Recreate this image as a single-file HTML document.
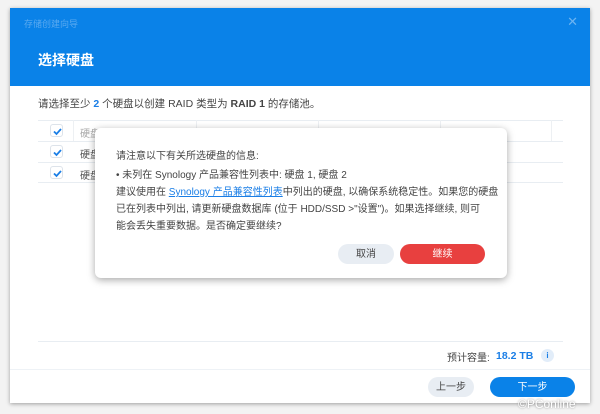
<!DOCTYPE html>
<html><head><meta charset="utf-8"><style>
*{margin:0;padding:0;box-sizing:border-box}
body{width:600px;height:414px;background:#f3f3f3;font-family:"Liberation Sans","Noto Sans CJK SC",sans-serif;position:relative;overflow:hidden;color:#333}
.win{position:absolute;left:10px;top:8px;width:580px;height:395px;background:#fff;box-shadow:0 1px 4px rgba(0,0,0,.35)}
.hd{position:absolute;left:0;top:0;width:580px;height:78px;background:#0a82e8}
.t1{position:absolute;left:14px;top:9px;font-size:9px;color:#5aaaf0}
.x{position:absolute;right:12px;top:6px;font-size:13px;color:#6cb4f2}
.t2{position:absolute;left:28px;top:42px;font-size:14px;color:#fff;font-weight:bold}
.abs{position:absolute;white-space:nowrap}
.line{position:absolute;height:1px;background:#e8edf2}
.vl{position:absolute;width:1px;background:#edf0f3;top:112px;height:21px}
.cb{position:absolute;width:13px;height:13px;border:1px solid #dde3ea;border-radius:3px}
.cb svg{position:absolute;left:1px;top:1px}
.modal{position:absolute;left:95px;top:128px;width:412px;height:150px;background:#fff;border-radius:6px;box-shadow:0 2px 8px rgba(0,0,0,.35);font-size:10px;color:#444}
.btn{position:absolute;border-radius:10px;font-size:10px;height:20px;display:flex;align-items:center;justify-content:center;line-height:1;padding-top:1px}
</style></head><body>
<div class="win">
<div class="hd"><div class="t1">存储创建向导</div><div class="x">✕</div><div class="t2">选择硬盘</div></div>
<div class="abs" style="left:28px;top:88px;font-size:10.5px;color:#444">请选择至少 <b style="color:#1a7ee6">2</b> 个硬盘以创建 RAID 类型为 <b>RAID 1</b> 的存储池。</div>
<div class="line" style="left:28px;top:112px;width:525px"></div>
<div class="line" style="left:28px;top:133px;width:525px"></div>
<div class="line" style="left:28px;top:154px;width:525px"></div>
<div class="line" style="left:28px;top:174px;width:525px"></div>
<div class="vl" style="left:63px"></div><div class="vl" style="left:186px"></div><div class="vl" style="left:308px"></div><div class="vl" style="left:430px"></div><div class="vl" style="left:541px"></div>
<div class="cb" style="left:40px;top:116px"><svg width="11" height="11"><path d="M2 5.5l2.5 2.5 4.5-5" stroke="#1a7ee6" stroke-width="1.8" fill="none"/></svg></div>
<div class="cb" style="left:40px;top:137px"><svg width="11" height="11"><path d="M2 5.5l2.5 2.5 4.5-5" stroke="#1a7ee6" stroke-width="1.8" fill="none"/></svg></div>
<div class="cb" style="left:40px;top:158px"><svg width="11" height="11"><path d="M2 5.5l2.5 2.5 4.5-5" stroke="#1a7ee6" stroke-width="1.8" fill="none"/></svg></div>
<div class="abs" style="left:70px;top:117px;font-size:10px;color:#aaa">硬盘</div>
<div class="abs" style="left:70px;top:138px;font-size:10px;color:#555">硬盘</div>
<div class="abs" style="left:70px;top:159px;font-size:10px;color:#555">硬盘</div>
<div class="line" style="left:28px;top:333px;width:525px"></div>
<div class="abs" style="left:437px;top:341px;font-size:10px;color:#444">预计容量:</div>
<div class="abs" style="left:486px;top:342px;font-size:10.5px;color:#1a7ee6;font-weight:bold">18.2 TB</div>
<div class="abs" style="left:531px;top:341px;width:13px;height:13px;border-radius:50%;background:#e2edf9;color:#1a7ee6;font-size:8px;text-align:center;line-height:13px;font-weight:bold">i</div>
<div class="line" style="left:0;top:361px;width:580px;background:#eef2f6"></div>
<div class="btn" style="left:418px;top:369px;width:46px;background:#e8edf3;color:#444">上一步</div>
<div class="btn" style="left:480px;top:369px;width:85px;background:#0a82e8;color:#fff">下一步</div>
</div>
<div class="modal">
<div class="abs" style="left:21px;top:19px">请注意以下有关所选硬盘的信息:</div>
<div class="abs" style="left:21px;top:38px">• 未列在 Synology 产品兼容性列表中: 硬盘 1, 硬盘 2</div>
<div class="abs" style="left:21px;top:55px">建议使用在 <span style="color:#1a7ee6;text-decoration:underline">Synology 产品兼容性列表</span>中列出的硬盘, 以确保系统稳定性。如果您的硬盘</div>
<div class="abs" style="left:21px;top:72px">已在列表中列出, 请更新硬盘数据库 (位于 HDD/SSD &gt;"设置")。如果选择继续, 则可</div>
<div class="abs" style="left:21px;top:89px">能会丢失重要数据。是否确定要继续?</div>
<div class="btn" style="left:243px;top:116px;width:56px;background:#e8edf3;color:#444">取消</div>
<div class="btn" style="left:305px;top:116px;width:85px;background:#e8403f;color:#fff">继续</div>
</div>
<div class="abs" style="left:518px;top:397px;font-size:12px;color:#fff;text-shadow:0 0 2px #888">©PConline</div>
</body></html>
